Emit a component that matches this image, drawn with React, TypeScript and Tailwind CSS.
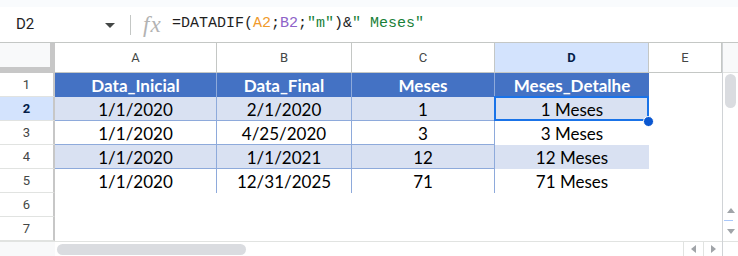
import React from 'react';

const rows = [
  { n: 2, band: true, cells: ['1/1/2020', '2/1/2020', '1', '1 Meses'] },
  { n: 3, band: false, cells: ['1/1/2020', '4/25/2020', '3', '3 Meses'] },
  { n: 4, band: true, cells: ['1/1/2020', '1/1/2021', '12', '12 Meses'] },
  { n: 5, band: false, cells: ['1/1/2020', '12/31/2025', '71', '71 Meses'] },
];

function FormulaBar() {
  return (
    <div className="h-[36px] shrink-0 flex items-center border-b border-[#c4c7c5] bg-white">
      <span className="w-[89px] pl-[16px] box-content text-[15px] text-[#1f1f1f] font-['Roboto',sans-serif]">D2</span>
      <svg width="10" height="5" viewBox="0 0 10 5" className="ml-0 mt-[1px]">
        <path d="M0 0 L10 0 L5 5 Z" fill="#444746" />
      </svg>
      <div className="ml-[15px] w-px h-[20px] bg-[#c4c7c5]" />
      <span className="ml-[12px] w-[19px] italic font-['Liberation_Serif',serif] text-[23px] leading-none text-[#b3b3b3] tracking-[1px]">
        fx
      </span>
      <span className="ml-[10px] font-['Liberation_Mono',monospace] text-[15px] text-[#1f1f1f] whitespace-pre">
        =DATADIF(<span className="text-[#f09a2c]">A2</span>;<span className="text-[#8e62c8]">B2</span>;
        <span className="text-[#188038]">"m"</span>)&amp;<span className="text-[#188038]">" Meses"</span>
      </span>
    </div>
  );
}

function ColumnHeaders() {
  return (
    <div className="flex h-[30px] shrink-0 text-[13px] text-[#444746]">
      <div className="w-[55px] bg-[#f8f9fa] border-r-[5px] border-b-[6px] border-[#c7c7c7]" />
      <div className="w-[162px] flex items-center justify-center border-r border-b border-[#c4c7c5]">A</div>
      <div className="w-[135px] flex items-center justify-center border-r border-b border-[#c4c7c5]">B</div>
      <div className="w-[143px] flex items-center justify-center border-r border-b border-[#c4c7c5]">C</div>
      <div className="w-[154px] flex items-center justify-center border-r border-b border-[#c4c7c5] bg-[#d3e3fd] text-[#041e49] font-bold">
        D
      </div>
      <div className="w-[73px] flex items-center justify-center border-r border-b border-[#c4c7c5]">E</div>
    </div>
  );
}

function RowHeader({ n, selected }: { n: number; selected?: boolean }) {
  return (
    <div
      className={`w-[55px] flex items-center justify-center border-r-2 border-b border-r-[#c7c7c7] border-b-[#e1e3e1] text-[13px] font-['Roboto',sans-serif] ${
        selected ? 'bg-[#d3e3fd] text-[#041e49] font-bold' : 'bg-white text-[#444746]'
      }`}
    >
      {n}
    </div>
  );
}

function TableHeaderRow() {
  return (
    <div className="flex h-[24px] shrink-0">
      <RowHeader n={1} />
      <div className="flex font-['Lato',sans-serif] text-[17px] font-bold text-white bg-[#4472c4]">
        <div className="w-[162px] flex items-center justify-center pt-[1px] border-r border-[#8eaadb]">Data_Inicial</div>
        <div className="w-[135px] flex items-center justify-center pt-[1px] border-r border-[#8eaadb]">Data_Final</div>
        <div className="w-[143px] flex items-center justify-center pt-[1px] border-r border-[#8eaadb]">Meses</div>
        <div className="w-[154px] flex items-center justify-center pt-[1px]">Meses_Detalhe</div>
      </div>
      <div className="w-[73px]" />
    </div>
  );
}

function DataRow({ n, band, cells, last }: { n: number; band: boolean; cells: string[]; last: boolean }) {
  const bg = band ? 'bg-[#d9e1f2]' : 'bg-white';
  const bottom = last ? '' : 'border-b';
  return (
    <div className="flex h-[24px] shrink-0">
      <RowHeader n={n} selected={n === 2} />
      <div className={`flex font-['Lato',sans-serif] text-[17px] text-black ${bg}`}>
        <div className={`w-[162px] flex items-center justify-center pt-[2px] border-r border-[#8eaadb] ${bottom}`}>{cells[0]}</div>
        <div className={`w-[135px] flex items-center justify-center pt-[2px] border-r border-[#8eaadb] ${bottom}`}>{cells[1]}</div>
        <div className={`w-[143px] flex items-center justify-center pt-[2px] border-r border-[#8eaadb] ${bottom}`}>{cells[2]}</div>
        <div className="relative w-[154px] flex items-center justify-center pt-[2px]">
          {cells[3]}
          {n === 2 && (
            <>
              <div className="absolute -left-px -top-px right-0 bottom-0 border-2 border-[#1a73e8]" />
              <div className="absolute left-[148px] top-[19px] w-[11px] h-[11px] rounded-full bg-[#0b57d0] border border-white" />
            </>
          )}
        </div>
      </div>
      <div className="w-[73px]" />
    </div>
  );
}

function EmptyRow({ n }: { n: number }) {
  return (
    <div className="flex h-[24px] shrink-0">
      <RowHeader n={n} />
      <div className="flex-1" />
    </div>
  );
}

function HScroll() {
  return (
    <div className="flex h-[15px] shrink-0 border-t border-[#e1e3e1]">
      <div className="w-[55px] bg-[#f8f9fa]" />
      <div className="flex-1 flex items-center pl-[2px]">
        <div className="w-[189px] h-[11px] rounded-full bg-[#dadce0]" />
      </div>
      <div className="w-[20px] flex items-center justify-center border-l border-[#e1e3e1]">
        <svg width="5" height="8" viewBox="0 0 5 8">
          <path d="M5 0 L5 8 L0 4 Z" fill="#a0a4a8" />
        </svg>
      </div>
      <div className="w-[19px] flex items-center justify-center border-l border-[#e1e3e1]">
        <svg width="5" height="8" viewBox="0 0 5 8">
          <path d="M0 0 L0 8 L5 4 Z" fill="#a0a4a8" />
        </svg>
      </div>
    </div>
  );
}

function VScroll() {
  return (
    <div className="w-[16px] flex flex-col border-l border-[#d0d3d6]">
      <div className="h-[30px] shrink-0 bg-[#f8f9fa] border-b border-[#e1e3e1]" />
      <div className="flex-1 flex flex-col items-center pt-px">
        <div className="w-[11px] h-[34px] rounded-full bg-[#dadce0]" />
        <div className="flex-1" />
        <div className="h-[20px] w-full flex items-center justify-center">
          <svg width="8" height="5" viewBox="0 0 8 5">
            <path d="M0 5 L8 5 L4 0 Z" fill="#a0a4a8" />
          </svg>
        </div>
        <div className="h-px w-[9px] self-start ml-px bg-[#a8c7fa]" />
        <div className="h-[20px] w-full flex items-center justify-center">
          <svg width="8" height="5" viewBox="0 0 8 5">
            <path d="M0 0 L8 0 L4 5 Z" fill="#a0a4a8" />
          </svg>
        </div>
      </div>
      <div className="h-[15px] shrink-0 border-t border-[#e1e3e1] bg-white" />
    </div>
  );
}

export default function App() {
  return (
    <div className="w-[738px] h-[256px] overflow-hidden bg-white font-['Roboto',sans-serif] flex flex-col">
      <div className="h-[7px] shrink-0 bg-[#f9fbfd]" />
      <FormulaBar />
      <div className="flex flex-1 min-h-0">
        <div className="w-[722px] flex flex-col">
          <ColumnHeaders />
          <TableHeaderRow />
          {rows.map((r, i) => (
            <DataRow key={r.n} n={r.n} band={r.band} cells={r.cells} last={i === rows.length - 1} />
          ))}
          <EmptyRow n={6} />
          <EmptyRow n={7} />
          <HScroll />
        </div>
        <VScroll />
      </div>
    </div>
  );
}
